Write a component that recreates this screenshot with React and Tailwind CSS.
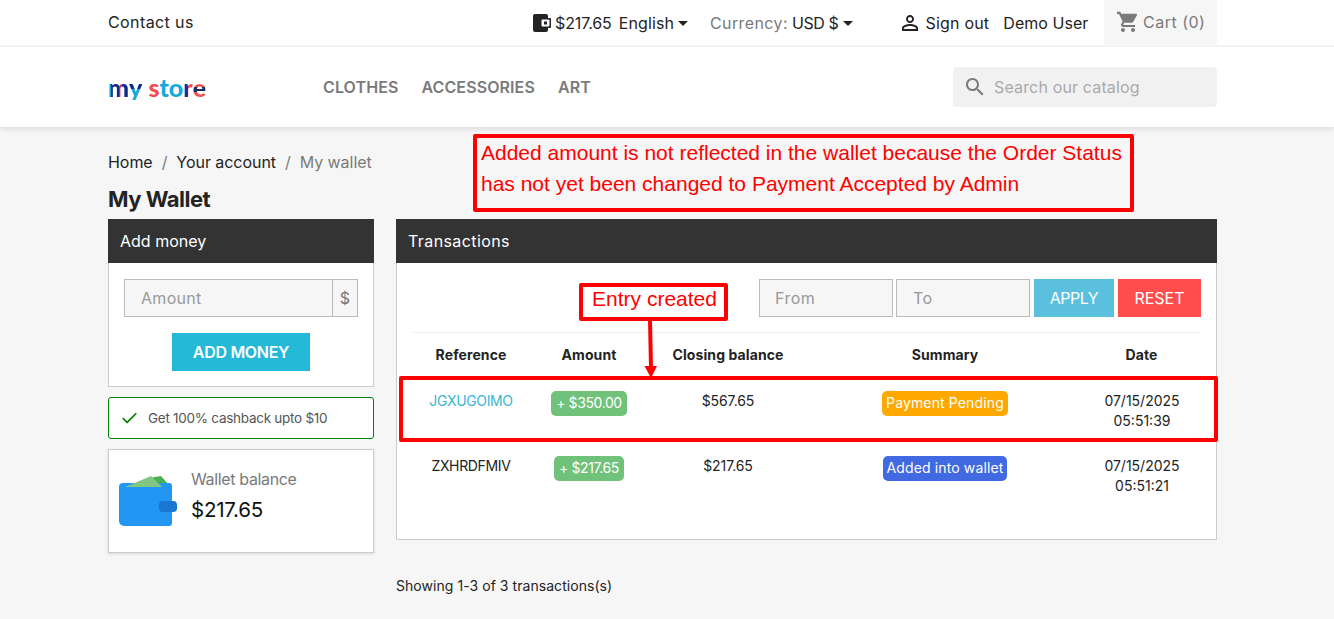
import { Check } from 'lucide-react'

const FONT = "font-['Inter','Noto_Sans',sans-serif]"

const Caret = () => (
  <span className="ml-[4px] inline-block h-0 w-0 border-x-[5px] border-t-[5px] border-x-transparent border-t-[#232323]" />
)

const PersonIcon = () => (
  <svg viewBox="0 0 24 24" className="h-[24px] w-[24px] fill-[#232323]">
    <path d="M12 5.9c1.16 0 2.1.94 2.1 2.1s-.94 2.1-2.1 2.1S9.9 9.16 9.9 8s.94-2.1 2.1-2.1m0 9c2.97 0 6.1 1.46 6.1 2.1v1.1H5.9V17c0-.64 3.13-2.1 6.1-2.1M12 4C9.79 4 8 5.79 8 8s1.79 4 4 4 4-1.79 4-4-1.79-4-4-4zm0 9c-2.67 0-8 1.34-8 4v3h16v-3c0-2.66-5.33-4-8-4z" />
  </svg>
)

const CartIcon = () => (
  <svg viewBox="0 0 24 24" className="h-[24px] w-[24px] fill-[#7a7a7a]">
    <path d="M7 18c-1.1 0-1.99.9-1.99 2S5.9 22 7 22s2-.9 2-2-.9-2-2-2zM1 2v2h2l3.6 7.59-1.35 2.45c-.16.28-.25.61-.25.96 0 1.1.9 2 2 2h12v-2H7.42c-.14 0-.25-.11-.25-.25l.03-.12.9-1.83h7.45c.75 0 1.41-.41 1.75-1.03l3.58-6.49c.08-.14.12-.31.12-.48 0-.55-.45-1-1-1H5.21l-.94-2H1zm16 16c-1.1 0-1.99.9-1.99 2s.89 2 1.99 2 2-.9 2-2-.9-2-2-2z" />
  </svg>
)

const SearchIcon = () => (
  <svg viewBox="0 0 24 24" className="h-[24px] w-[24px] fill-[#7a7a7a]">
    <path d="M15.5 14h-.79l-.28-.27C15.41 12.59 16 11.11 16 9.5 16 5.91 13.09 3 9.5 3S3 5.91 3 9.5 5.91 16 9.5 16c1.61 0 3.09-.59 4.23-1.57l.27.28v.79l5 4.99L20.49 19l-4.99-5zm-6 0C7.01 14 5 11.99 5 9.5S7.01 5 9.5 5 14 7.01 14 9.5 11.99 14 9.5 14z" />
  </svg>
)

const SmallWallet = () => (
  <svg viewBox="0 0 18 18" className="h-[18px] w-[18px]">
    <rect x="0" y="0" width="15" height="18" rx="2" fill="#232323" />
    <rect x="7" y="4" width="11" height="10" rx="1" fill="#232323" />
    <rect x="8.5" y="5.5" width="8" height="7" rx="1" fill="#fff" />
    <rect x="11" y="7.5" width="3" height="3" fill="#232323" />
  </svg>
)

const BigWallet = () => (
  <svg viewBox="0 0 58 52" className="h-[52px] w-[58px]">
    <path d="M30 3 L42 1 L50 10 L36 10 Z" fill="#4caf50" />
    <path d="M4 8 H50 a3 3 0 0 1 3 3 V48 a3 3 0 0 1 -3 3 H5 a5 5 0 0 1 -5 -5 V12 a4 4 0 0 1 4 -4 Z" fill="#2196f3" />
    <path d="M6 12 L32 1 L43 12 Z" fill="#81c784" />
    <rect x="40" y="26" width="18" height="11" rx="4" fill="#1976d2" />
  </svg>
)

// badge colours per row
const rows = [
  {
    ref: 'JGXUGOIMO',
    refColor: 'text-[#3cb6d3]',
    amount: '+ $350.00',
    closing: '$567.65',
    summary: 'Payment Pending',
    summaryColor: 'bg-[#ffa800]',
    time: '05:51:39',
  },
  {
    ref: 'ZXHRDFMIV',
    refColor: 'text-[#232323]',
    amount: '+ $217.65',
    closing: '$217.65',
    summary: 'Added into wallet',
    summaryColor: 'bg-[#4169e1]',
    time: '05:51:21',
  },
]

const TopBar = () => (
  <div className="border-b-2 border-[#f6f6f6] bg-white">
    <div className="ml-[108px] flex h-[45px] w-[1109px] items-center whitespace-nowrap text-[16px] tracking-[-0.1px] text-[#232323]">
      <span className="w-[425px] pb-[1px] tracking-[0.4px]">Contact us</span>
      <div className="flex items-center pt-[1px]">
        <SmallWallet />
        <span className="ml-[4px]">$217.65</span>
        <span className="ml-[7px] tracking-[0.1px]">English</span>
        <Caret />
        <span className="ml-[22px] tracking-[0.4px] text-[#7a7a7a]">Currency:</span>
        <span className="ml-[4px] tracking-[-0.4px]">USD $</span>
        <Caret />
        <span className="ml-[45px]"><PersonIcon /></span>
        <span className="ml-[4px] tracking-[0.2px]">Sign out</span>
        <span className="ml-[14px] tracking-[0.05px]">Demo User</span>
      </div>
      <div className="ml-auto flex h-[45px] w-[113px] items-center bg-[#f6f6f6] pb-[1px] pl-[12px] text-[#7a7a7a]">
        <CartIcon />
        <span className="ml-[3px] tracking-[0.5px]">Cart (0)</span>
      </div>
    </div>
  </div>
)

const Logo = () => (
  <div className="flex w-[215px] text-[25px] leading-none font-black font-['Lato',sans-serif]">
    <span className="bg-[linear-gradient(90deg,#1aa7d8_0_14%,#0b2a8c_14%_52%,#d0245c_52%_66%,#0b2a8c_66%)] bg-clip-text text-transparent">m</span>
    <span className="mr-[6px] bg-[linear-gradient(180deg,#0b2a8c_55%,#1aa7d8_55%)] bg-clip-text text-transparent">y</span>
    <span className="text-[#f0504f]">s</span>
    <span className="text-[#18a9dc]">to</span>
    <span className="bg-[linear-gradient(90deg,#1c2f9c_50%,#f0504f_50%)] bg-clip-text text-transparent">r</span>
    <span className="bg-[linear-gradient(180deg,#f0504f_50%,#14306e_50%_66%,#f0504f_66%)] bg-clip-text text-transparent">e</span>
  </div>
)

const Header = () => (
  <div className="bg-white shadow-[0_2px_5px_0_rgba(0,0,0,0.11)]">
    <div className="ml-[108px] flex h-[80px] w-[1109px] items-center">
      <Logo />
      <nav className="flex gap-[23px] text-[16px] font-semibold tracking-[0.1px] text-[#7a7a7a]">
        <span>CLOTHES</span>
        <span>ACCESSORIES</span>
        <span>ART</span>
      </nav>
      <div className="ml-auto flex h-[40px] w-[264px] items-center rounded-[4px] bg-[#f1f1f1] pl-[10px] text-[16px] tracking-[0.15px] text-[#aaa]">
        <SearchIcon />
        <span className="ml-[7px]">Search our catalog</span>
      </div>
    </div>
  </div>
)

const AddMoneyPanel = () => (
  <div>
    <div className="flex h-[44px] items-center bg-[#333] px-[12px] text-[16px] text-white">Add money</div>
    <div className="h-[124px] border border-t-0 border-[#ccc] bg-white px-[15px] pt-[16px]">
      <div className="flex h-[38px] border border-[#bbb] bg-[#f6f6f6] text-[16px] tracking-[0.3px] text-[#999]">
        <span className="flex flex-1 items-center pl-[16px]">Amount</span>
        <span className="flex w-[25px] items-center justify-center border-l border-[#bbb] text-[#777]">$</span>
      </div>
      <div className="mx-auto mt-[16px] flex h-[38px] w-[138px] items-center justify-center bg-[#24b9d7] text-[16px] font-semibold tracking-[-0.3px] text-white">
        ADD MONEY
      </div>
    </div>
    <div className="mt-[10px] flex h-[42px] items-center rounded-[3px] border border-[#008000] bg-white pl-[11px] text-[13.5px] tracking-[-0.27px] text-[#555]">
      <Check size={19} strokeWidth={2.2} className="text-[#008000]" />
      <span className="ml-[9px]">Get 100% cashback upto $10</span>
    </div>
    <div className="mt-[10px] flex h-[104px] items-center border border-[#ccc] bg-white pl-[10px] shadow-[0_1px_3px_rgba(0,0,0,0.12)]">
      <BigWallet />
      <div className="mb-[10px] ml-[14px]">
        <div className="text-[16px] tracking-[-0.35px] text-[#7a7a7a]">Wallet balance</div>
        <div className="mt-[4px] text-[20.5px] tracking-[-0.25px] text-[#111]">$217.65</div>
      </div>
    </div>
  </div>
)

const TransactionsPanel = () => (
  <div>
    <div className="flex h-[44px] items-center bg-[#333] px-[12px] text-[16px] tracking-[0.4px] text-white">Transactions</div>
    <div className="h-[277px] border border-t-0 border-[#ccc] bg-white px-[15px] pt-[16px]">
      <div className="flex h-[38px] justify-end text-[16px]">
        <div className="flex w-[134px] items-center border border-[#bbb] bg-[#f6f6f6] pl-[15px] tracking-[0.5px] text-[#999]">From</div>
        <div className="ml-[3px] flex w-[134px] items-center border border-[#bbb] bg-[#f6f6f6] pl-[16px] tracking-[0.5px] text-[#999]">To</div>
        <div className="ml-[4px] flex w-[80px] items-center justify-center bg-[#5bc0de] tracking-[-0.5px] text-white">APPLY</div>
        <div className="ml-[4px] flex w-[83px] items-center justify-center bg-[#ff4c4c] text-white">RESET</div>
      </div>
      <table className="mt-[15px] w-[789px] table-fixed border-t border-[#f1f1f1] text-center text-[14px] text-[#232323]">
        <colgroup>
          <col className="w-[118px]" />
          <col className="w-[118px]" />
          <col className="w-[160px]" />
          <col className="w-[274px]" />
          <col className="w-[119px]" />
        </colgroup>
        <thead>
          <tr className="h-[44px] font-bold tracking-[0.1px]">
            <th>Reference</th>
            <th>Amount</th>
            <th>Closing balance</th>
            <th>Summary</th>
            <th>Date</th>
          </tr>
        </thead>
        <tbody>
          {rows.map((row) => (
            <tr key={row.ref} className="h-[65px] align-top">
              <td className={`pt-[13px] tracking-[-0.35px] ${row.refColor}`}>{row.ref}</td>
              <td className="pt-[14px]">
                <span className="inline-block rounded-[5px] bg-[#70c17a] px-[5px] pt-[1px] pb-[3px] tracking-[-0.4px] text-white">{row.amount}</span>
              </td>
              <td className="pt-[13px] tracking-[-0.1px]">{row.closing}</td>
              <td className="pt-[14px]">
                <span className={`inline-block rounded-[5px] px-[4px] pt-[1px] pb-[3px] tracking-[0.13px] text-white ${row.summaryColor}`}>{row.summary}</span>
              </td>
              <td className="pt-[14px] pl-[1px] leading-[20px]">07/15/2025<br />{row.time}</td>
            </tr>
          ))}
        </tbody>
      </table>
    </div>
    <div className="mt-[35px] text-[14px] tracking-[0.05px] text-[#232323]">Showing 1-3 of 3 transactions(s)</div>
  </div>
)

// red annotations drawn over the page
const Annotations = () => (
  <>
    <div className="absolute left-[473px] top-[134px] h-[78px] w-[661px] whitespace-nowrap rounded-[2px] border-[4px] border-[#f00] pl-[4px] text-[21px] leading-[31px] text-[#f00] font-['Liberation_Sans',sans-serif]">
      <div className="-mt-[1px]">
        Added amount is not reflected in the wallet because the Order Status<br />has not yet been changed to Payment Accepted by Admin
      </div>
    </div>
    <div className="absolute left-[579px] top-[283px] flex h-[38px] w-[149px] items-center justify-center rounded-[2px] border-[4px] border-[#f00] bg-white pb-[7px] pl-[2px] text-[21px] text-[#f00] font-['Liberation_Sans',sans-serif]">
      Entry created
    </div>
    <svg className="absolute left-[640px] top-[320px] h-[60px] w-[20px]" viewBox="0 0 20 60">
      <path d="M10 0 L11 48" stroke="#f00" strokeWidth="4" fill="none" />
      <path d="M4.5 46 H17 L11 58 Z" fill="#f00" />
    </svg>
    <div className="absolute left-[399px] top-[376px] h-[66px] w-[819px] rounded-[2px] border-[4px] border-[#f00]" />
  </>
)

const App = () => (
  <main className={`relative h-[619px] overflow-hidden bg-[#f6f6f6] ${FONT}`}>
    <TopBar />
    <Header />
    <div className="ml-[108px] w-[1109px]">
      <div className="mt-[23px] flex items-center gap-[9px] text-[16px] tracking-[-0.05px] text-[#232323]">
        <span>Home</span>
        <span className="text-[#7a7a7a]">/</span>
        <span>Your account</span>
        <span className="text-[#7a7a7a]">/</span>
        <span className="text-[#7a7a7a]">My wallet</span>
      </div>
      <h1 className="mt-[11px] text-[22px] leading-[28px] font-bold tracking-[-0.5px] text-[#232323]">My Wallet</h1>
      <div className="mt-[6px] flex gap-[22px]">
        <div className="w-[266px]"><AddMoneyPanel /></div>
        <div className="w-[821px]"><TransactionsPanel /></div>
      </div>
    </div>
    <Annotations />
  </main>
)

export default App
